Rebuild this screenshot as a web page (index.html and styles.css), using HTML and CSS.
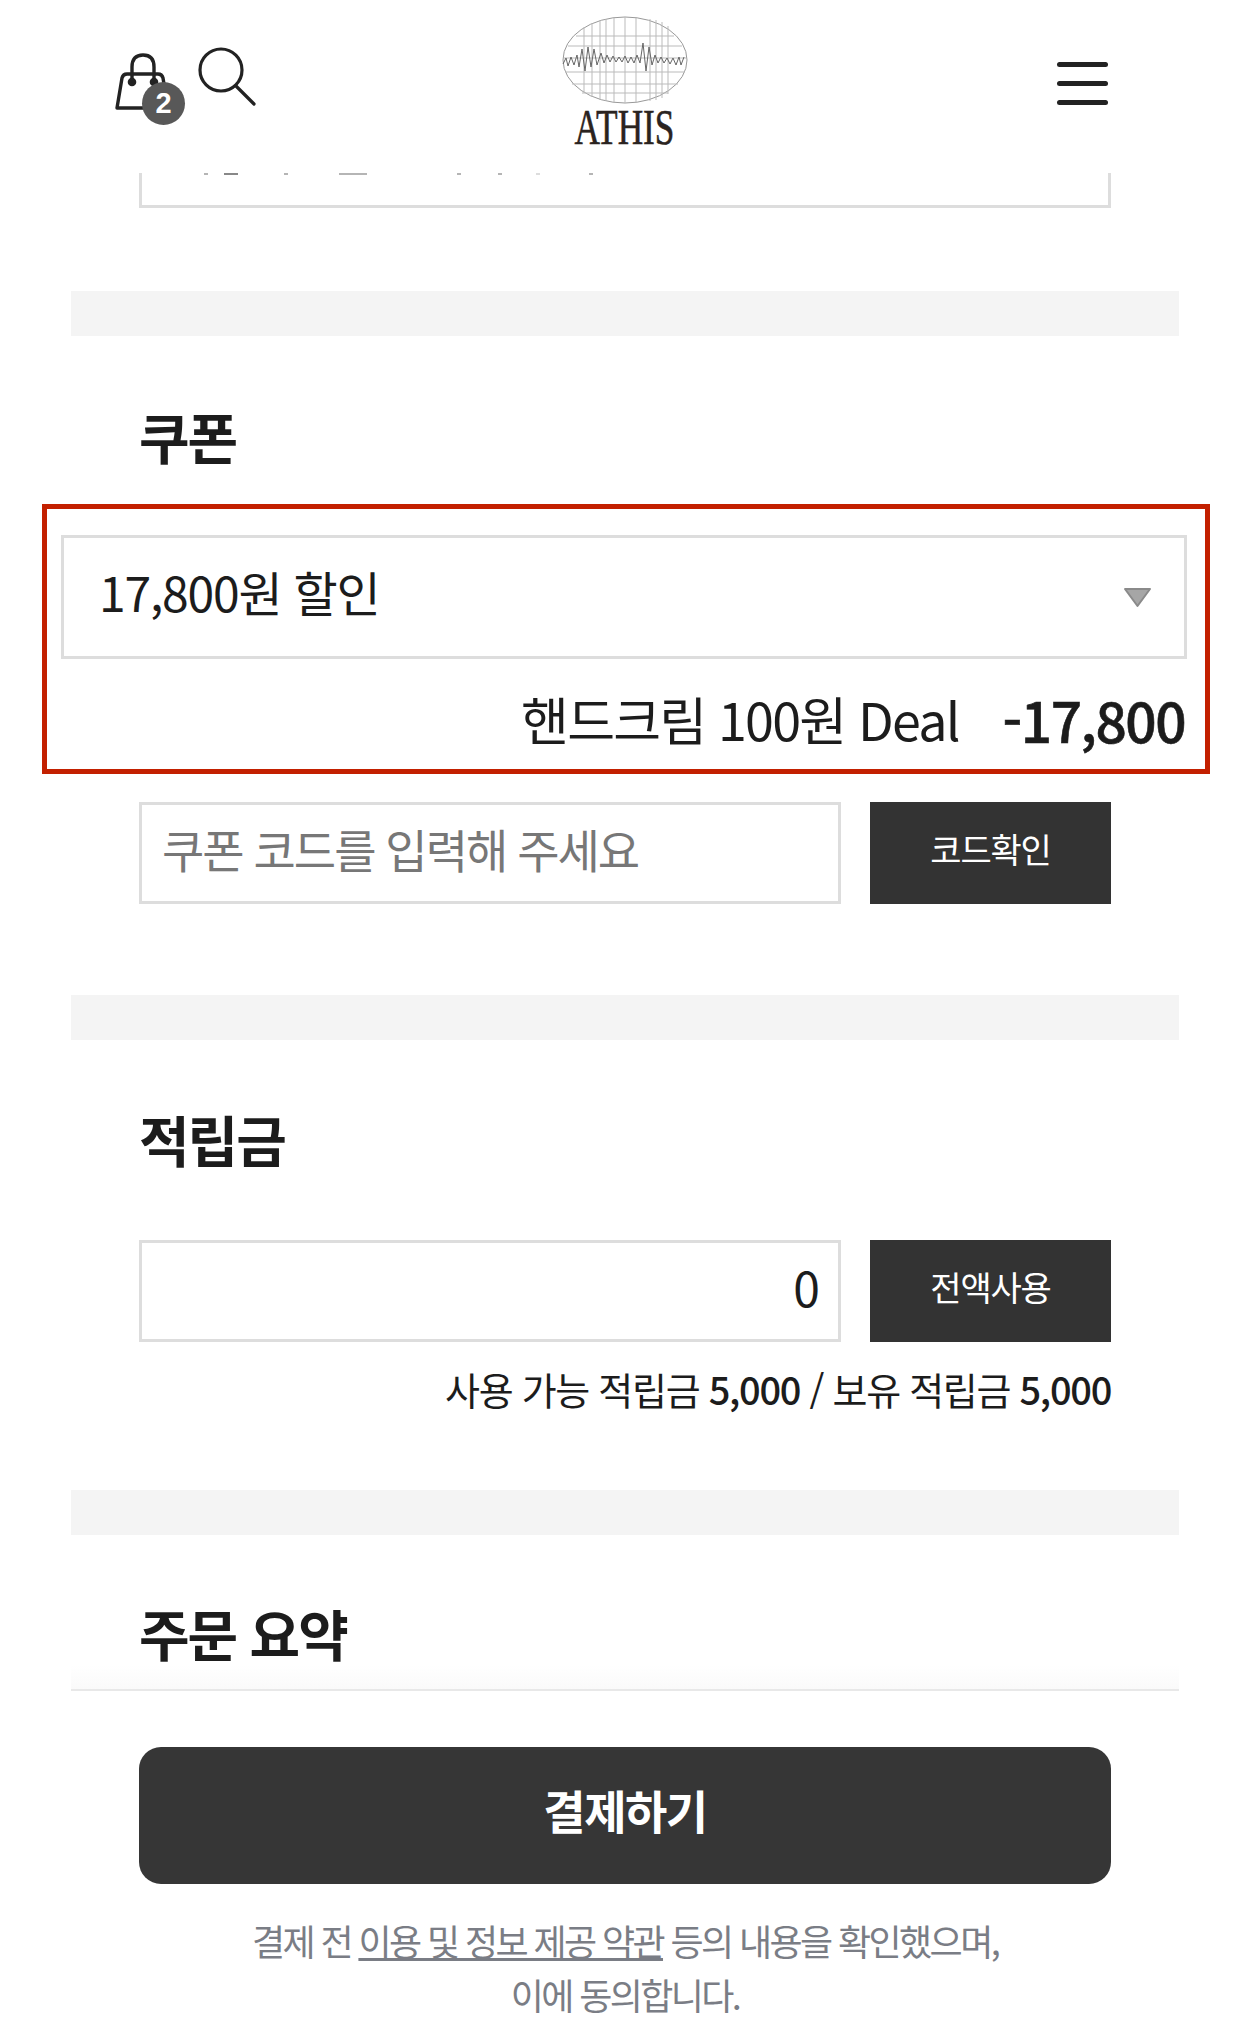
FILE: index.html
```html
<!DOCTYPE html>
<html lang="ko">
<head>
  <meta charset="UTF-8">
  <title>ATHIS - 주문서</title>
  <link rel="stylesheet" href="styles.css">
</head>
<body>
  <div class="header">
    <div class="header-left">
      <div class="cart">
        <svg class="cart-icon" width="56" height="60" viewBox="0 0 56 60" fill="none" stroke="#222" stroke-width="3.4" stroke-linecap="round" stroke-linejoin="round">
          <path d="M3 56 L8 26 Q9 22 13 22 L44 22 Q48 22 49 26 L54 56 Z"/>
          <path d="M18 29 V15 Q18 3 29 3 Q40 3 40 15 V29"/>
          <circle cx="18" cy="30" r="2.6" fill="#222"/>
          <circle cx="40" cy="30" r="2.6" fill="#222"/>
        </svg>
        <span class="cart-badge">2</span>
      </div>
      <svg class="search-icon" width="60" height="60" viewBox="0 0 60 60" fill="none" stroke="#222" stroke-width="3.2" stroke-linecap="round">
        <circle cx="23" cy="23" r="21"/>
        <path d="M38 39 L56 57"/>
      </svg>
    </div>
    <div class="logo">
      <svg width="126" height="88" viewBox="0 0 126 88" fill="none">
        <ellipse cx="63" cy="44" rx="62" ry="43" fill="#fff" stroke="#999" stroke-width="1"/>
        <path stroke="#bbb" stroke-width="1" d="M22 11V77M30 7V81M38 4V84M44 3V85M52 2V86M63 1V87M74 2V86M88 3V85M94 4V84M100 6V82M106 10V78M14 20H112M6 30H120M2 42H124M3 56H123M10 68H116M20 77H106"/>
        <path stroke="#666" stroke-width="1" d="M1 48l3-6 2 8 3-9 3 8 3-10 2 12 3-18 3 22 3-24 3 20 3-18 3 16 4-12 3 10 3-8 3 7 3-6 3 6 3-5 3 5 3-6 3 7 3-6 3 6 3-8 3 8 3-20 3 28 3-24 3 18 3-10 3 8 3-6 3 6 3-5 3 6 3-6 3 7 3-8 2 8 3-8"/>
      </svg>
      <span class="logo-text">ATHIS</span>
    </div>
    <div class="menu-btn">
      <span></span>
      <span></span>
      <span></span>
    </div>
  </div>

  <div class="clipped-input">
    <i class="tick tick-a"></i>
    <i class="tick tick-b"></i>
    <i class="tick tick-c"></i>
    <i class="tick tick-d"></i>
    <i class="tick tick-e"></i>
    <i class="tick tick-f"></i>
    <i class="tick tick-g"></i>
    <i class="tick tick-h"></i>
  </div>
  <div class="band band-first"></div>

  <h2 class="section-title title-coupon">쿠폰</h2>
  <div class="highlight">
    <div class="select">
      <span class="select-text">17,800원 할인</span>
      <svg class="select-arrow" width="29" height="21" viewBox="0 0 29 21">
        <path d="M2 2 H27 L14.5 19 Z" fill="#a6a6a6" stroke="#8a8a8a" stroke-width="2" stroke-linejoin="round"/>
      </svg>
    </div>
    <div class="coupon-line">
      <span class="coupon-name">핸드크림 100원 Deal</span>
      <span class="coupon-price">-17,800</span>
    </div>
  </div>
  <div class="field-row row-code">
    <div class="field placeholder">쿠폰 코드를 입력해 주세요</div>
    <div class="field-btn">코드확인</div>
  </div>

  <div class="band band-second"></div>

  <h2 class="section-title title-point">적립금</h2>
  <div class="field-row">
    <div class="field value">0</div>
    <div class="field-btn">전액사용</div>
  </div>
  <p class="point-info">사용 가능 적립금 <b>5,000</b> / 보유 적립금 <b>5,000</b></p>

  <div class="band band-third"></div>

  <h2 class="section-title title-summary">주문 요약</h2>
  <div class="footer-fade"></div>

  <div class="pay-btn">결제하기</div>
  <p class="terms">결제 전 <u>이용 및 정보 제공 약관</u> 등의 내용을 확인했으며,<br>이에 동의합니다.</p>
</body>
</html>
```

FILE: styles.css
```css
* {
  box-sizing: border-box;
}

html,
body {
  margin: 0;
  padding: 0;
}

body {
  width: 1250px;
  height: 2042px;
  overflow: hidden;
  background: #fff;
  color: #1c1c1c;
  font-family: "Noto Sans CJK KR", "Noto Sans", sans-serif;
}

.header {
  height: 173px;
  display: flex;
  position: relative;
}

.header-left {
  position: absolute;
  left: 114px;
  top: 47px;
  display: flex;
  align-items: flex-start;
  gap: 28px;
}

.cart {
  position: relative;
  width: 56px;
  height: 60px;
  margin-top: 5px;
}

.cart-badge {
  position: absolute;
  left: 28px;
  top: 30px;
  width: 43px;
  height: 43px;
  border-radius: 50%;
  background: #585858;
  color: #fff;
  font-family: "Liberation Sans", sans-serif;
  font-size: 29px;
  font-weight: 700;
  line-height: 43px;
  text-align: center;
}

.logo {
  position: absolute;
  left: 562px;
  top: 16px;
  width: 126px;
  display: flex;
  flex-direction: column;
  align-items: center;
}

.logo svg {
  display: block;
}

.logo-text {
  font-family: "Liberation Serif", serif;
  font-size: 42px;
  line-height: 46px;
  color: #2a2320;
  -webkit-text-stroke: 0.5px #2a2320;
  transform: scale(0.84, 1.2);
  white-space: nowrap;
}

.menu-btn {
  position: absolute;
  left: 1057px;
  top: 62px;
  width: 51px;
  display: flex;
  flex-direction: column;
  gap: 14px;
}

.menu-btn span {
  display: block;
  height: 5px;
  border-radius: 3px;
  background: #222;
}

.clipped-input {
  height: 35px;
  margin: 0 139px;
  border: 3px solid #ddd;
  border-top: none;
  display: flex;
  align-items: flex-start;
}

.tick {
  display: block;
  width: 4px;
  height: 2px;
  background: #b5b5b5;
}

.tick-a { margin-left: 62px; }
.tick-b { margin-left: 16px; width: 14px; background: #888; }
.tick-c { margin-left: 46px; }
.tick-d { margin-left: 51px; width: 28px; }
.tick-e { margin-left: 90px; }
.tick-f { margin-left: 37px; }
.tick-g { margin-left: 34px; background: #ddd; }
.tick-h { margin-left: 49px; }

.band {
  height: 45px;
  margin: 0 71px;
  background: #f4f4f4;
}

.band-first {
  margin-top: 83px;
}

.band-second {
  margin-top: 91px;
}

.band-third {
  margin-top: 76px;
}

.section-title {
  margin: 0 0 0 139px;
  font-size: 55px;
  line-height: 60px;
  font-weight: 700;
  letter-spacing: -2px;
}

.title-coupon {
  margin-top: 69px;
  margin-bottom: 39px;
}

.title-point {
  margin-top: 68px;
  margin-bottom: 72px;
}

.title-summary {
  margin-top: 67px;
  margin-bottom: 3px;
}

.highlight {
  height: 270px;
  margin: 0 40px 28px 42px;
  padding: 26px 18px 0 14px;
  border: 5px solid #c32000;
}

.select {
  height: 124px;
  padding: 0 32px 0 35px;
  border: 3px solid #ddd;
  display: flex;
  align-items: center;
  justify-content: space-between;
  font-size: 48px;
  letter-spacing: -1.2px;
}

.select-text {
  margin-bottom: 12px;
}

.coupon-line {
  height: 109px;
  padding: 10px 2px 0 0;
  display: flex;
  align-items: center;
  justify-content: flex-end;
  gap: 44px;
  font-size: 52px;
  letter-spacing: -1.8px;
}

.coupon-price {
  font-size: 55px;
  font-weight: 500;
  letter-spacing: -1.5px;
  -webkit-text-stroke: 0.6px #1c1c1c;
}

.field-row {
  height: 102px;
  margin: 0 139px;
  display: flex;
  gap: 29px;
}

.field {
  width: 702px;
  padding: 0 20px 10px;
  border: 3px solid #ddd;
  display: flex;
  align-items: center;
  font-size: 46px;
  letter-spacing: -2px;
}

.placeholder {
  color: #777;
}

.value {
  justify-content: flex-end;
  font-size: 48px;
}

.field-btn {
  flex: 1;
  padding-bottom: 10px;
  background: #333;
  color: #fff;
  display: flex;
  align-items: center;
  justify-content: center;
  font-size: 34px;
  letter-spacing: -1.2px;
}

.point-info {
  margin: 22px 139px 0;
  font-size: 38px;
  line-height: 50px;
  letter-spacing: -1.3px;
  text-align: right;
}

.point-info b {
  font-weight: 500;
}

.footer-fade {
  height: 26px;
  margin: 0 71px;
  background: linear-gradient(#fff, #fafafa);
  border-bottom: 2px solid #e8e8e8;
}

.pay-btn {
  height: 137px;
  margin: 56px 139px 0;
  padding-bottom: 14px;
  border-radius: 22px;
  background: #363636;
  color: #fff;
  display: flex;
  align-items: center;
  justify-content: center;
  font-size: 46px;
  font-weight: 700;
  letter-spacing: -1.5px;
}

.terms {
  margin: 29px 0 0;
  color: #7a7d85;
  font-size: 36px;
  line-height: 54px;
  letter-spacing: -2.6px;
  text-align: center;
}
```
